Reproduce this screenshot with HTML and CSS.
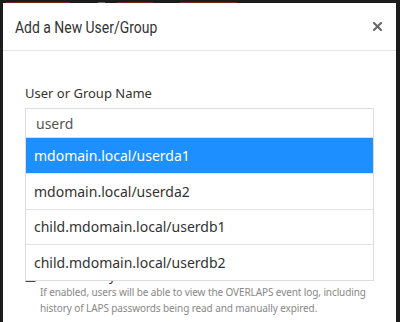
FILE: index.html
```html
<!DOCTYPE html>
<html lang="en">
<head>
	<meta charset="UTF-8">
	<title>Add a New User/Group</title>
	<link rel="stylesheet" href="styles.css">
</head>
<body>
	<div class="backdrop-strip">
		<span class="strip-red s1"></span>
		<span class="strip-grey s2"></span>
		<span class="strip-red s3"></span>
		<span class="strip-red s4"></span>
	</div>
	<div class="modal">
		<div class="modal-header">
			<h4 class="modal-title">Add a New User/Group</h4>
			<button class="close" aria-label="Close">
				<svg width="9" height="9" viewBox="0 0 9 9"><path d="M1 1L8 8M8 1L1 8" stroke="#666" stroke-width="2" stroke-linecap="square"/></svg>
			</button>
		</div>
		<div class="modal-body">
			<div class="form-group">
				<label for="name" class="field-label">User or Group Name</label>
				<div class="typeahead">
					<input id="name" class="field-input" type="text" value="userd">
					<ul class="dropdown">
						<li class="dropdown-item active">mdomain.local/userda1</li>
						<li class="dropdown-item">mdomain.local/userda2</li>
						<li class="dropdown-item">child.mdomain.local/userdb1</li>
						<li class="dropdown-item">child.mdomain.local/userdb2</li>
					</ul>
				</div>
			</div>
			<div class="check-row">
				<span class="checkbox"></span>
				<span class="check-label">View History</span>
			</div>
			<p class="help-text">If enabled, users will be able to view the OVERLAPS event log, including history of LAPS passwords being read and manually expired.</p>
		</div>
	</div>
</body>
</html>
```

FILE: styles.css
```css
/* General styles */
body {
	margin: 0;
	background: #1c1c1c;
	font-family: 'Noto Sans', 'Open Sans', Arial, sans-serif;
	height: 322px;
	overflow: hidden;
}
.backdrop-strip {
	height: 3px;
	display: flex;
	align-items: flex-end;
}
.strip-red,
.strip-grey {
	height: 1px;
	background: #7c1f1f;
}
.strip-grey {
	background: #666;
}
.s1 { width: 64px; margin-left: 6px; }
.s2 { width: 7px; margin-left: 28px; }
.s3 { width: 36px; margin-left: 12px; }
.s4 { width: 57px; margin-left: 27px; }

.modal {
	margin: 0 4px 0 3px;
	background: #fff;
	height: 319px;
}
.modal-header {
	height: 47px;
	padding: 0 14px 0 12px;
	display: flex;
	align-items: center;
	justify-content: space-between;
	border-bottom: 1px solid #e5e5e5;
}
.modal-title {
	margin: 0;
	font-family: 'Roboto', sans-serif;
	font-weight: normal;
	font-size: 17px;
	color: #333;
	transform: scaleX(0.82);
	transform-origin: left center;
}
.close {
	border: 0;
	background: none;
	padding: 0;
	display: flex;
	cursor: pointer;
}
.modal-body {
	padding: 32px 22px 0;
}
.field-label {
	display: block;
	font-size: 13px;
	line-height: 20px;
	color: #333;
	margin-bottom: 5px;
}
.typeahead {
	position: relative;
}
.field-input {
	display: block;
	box-sizing: border-box;
	width: 100%;
	height: 30px;
	margin: 0;
	padding: 0 10px;
	border: 1px solid #ddd;
	font-family: inherit;
	font-size: 14px;
	color: #555;
	outline: none;
}
.dropdown {
	position: absolute;
	top: 30px;
	left: 0;
	right: 0;
	margin: 0;
	padding: 0;
	list-style: none;
	background: #fff;
	border: 1px solid #ddd;
	border-top: 0;
	z-index: 2;
}
.dropdown-item {
	height: 35.5px;
	box-sizing: border-box;
	display: flex;
	align-items: center;
	padding-left: 8px;
	font-size: 14px;
	color: #333;
	border-top: 1px solid #e3e3e3;
}
.dropdown-item:first-child {
	height: 35px;
	border-top: 0;
}
.dropdown-item.active {
	background: #1e8fff;
	color: #fff;
}
.check-row {
	margin-top: 129px;
	height: 18px;
	display: flex;
	align-items: center;
	gap: 4px;
}
.checkbox {
	width: 9px;
	height: 9px;
	border: 1px solid #444;
	border-radius: 1px;
}
.check-label {
	font-size: 13px;
	color: #333;
}
.help-text {
	margin: 0;
	padding-left: 15px;
	font-size: 10px;
	letter-spacing: -0.1px;
	line-height: 15.5px;
	color: #888;
}
```
